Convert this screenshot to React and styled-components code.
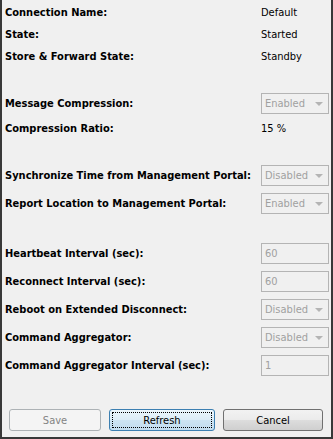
import React from 'react'
import styled, { createGlobalStyle } from 'styled-components'

const Global = createGlobalStyle`
  html, body { margin: 0; padding: 0; background: #f0f0f0; }
  * { box-sizing: border-box; }
`

// window frame
const Window = styled.div`
  width: 333px;
  height: 439px;
  background: #f0f0f0;
  border: 2px solid #383838;
  border-top: none;
  display: flex;
  flex-direction: column;
  font-family: "DejaVu Sans Condensed", "DejaVu Sans", sans-serif;
  font-size: 11px;
  color: #000;
`

const Form = styled.div`
  padding: 1px 3px 0 3px;
  display: flex;
  flex-direction: column;
  gap: 22px;
`

const Section = styled.div`
  display: flex;
  flex-direction: column;
`

const Row = styled.div`
  height: ${p => (p.$control ? 28 : 22)}px;
  display: grid;
  grid-template-columns: 256px 1fr;
  align-items: center;
`

const Label = styled.span`
  font-weight: bold;
  white-space: nowrap;
`

const Value = styled.span`
  white-space: nowrap;
`

const Box = styled.div`
  width: 68px;
  height: 21px;
  border: 1px solid #b4b4b4;
  color: #a0a0a0;
  padding: 0 3px;
  display: flex;
  align-items: center;
  justify-content: space-between;
  white-space: nowrap;
`

const Arrow = styled.span`
  width: 0;
  height: 0;
  border-left: 4px solid transparent;
  border-right: 4px solid transparent;
  border-top: 4px solid #b4b4b4;
  margin-right: 2px;
  margin-top: 2px;
`

const Buttons = styled.div`
  margin-top: auto;
  padding: 0 0 6px 7px;
  display: flex;
  gap: 8px;
`

const Button = styled.div`
  width: ${p => p.$w}px;
  height: 22px;
  border-radius: 3px;
  display: flex;
  align-items: center;
  justify-content: center;
  position: relative;
  border: 1px solid ${p => (p.$disabled ? '#adb2b5' : p.$focus ? '#3c7fb1' : '#707070')};
  color: ${p => (p.$disabled ? '#838383' : '#000')};
  background: ${p =>
    p.$disabled
      ? '#f4f4f4'
      : p.$focus
      ? 'linear-gradient(#ecf6fc 0%, #dcecf7 50%, #cde4f3 51%, #c2dcef 100%)'
      : 'linear-gradient(#f2f2f2 0%, #ebebeb 50%, #dddddd 51%, #cfcfcf 100%)'};
`

const Focus = styled.span`
  position: absolute;
  inset: 2px;
  border: 1px dotted #000;
`

const Select = ({ children }) => (
  <Box>
    {children}
    <Arrow />
  </Box>
)

const App = () => (
  <Window>
    <Global />
    <Form>
      <Section>
        <Row><Label>Connection Name:</Label><Value>Default</Value></Row>
        <Row><Label>State:</Label><Value>Started</Value></Row>
        <Row><Label>Store &amp; Forward State:</Label><Value>Standby</Value></Row>
      </Section>
      <Section>
        <Row $control><Label>Message Compression:</Label><Select>Enabled</Select></Row>
        <Row><Label>Compression Ratio:</Label><Value>15 %</Value></Row>
      </Section>
      <Section>
        <Row $control><Label>Synchronize Time from Management Portal:</Label><Select>Disabled</Select></Row>
        <Row $control><Label>Report Location to Management Portal:</Label><Select>Enabled</Select></Row>
      </Section>
      <Section>
        <Row $control><Label>Heartbeat Interval (sec):</Label><Box>60</Box></Row>
        <Row $control><Label>Reconnect Interval (sec):</Label><Box>60</Box></Row>
        <Row $control><Label>Reboot on Extended Disconnect:</Label><Select>Disabled</Select></Row>
        <Row $control><Label>Command Aggregator:</Label><Select>Disabled</Select></Row>
        <Row $control><Label>Command Aggregator Interval (sec):</Label><Box>1</Box></Row>
      </Section>
    </Form>
    <Buttons>
      <Button $w={92} $disabled>Save</Button>
      <Button $w={106} $focus><Focus />Refresh</Button>
      <Button $w={100}>Cancel</Button>
    </Buttons>
  </Window>
)

export default App
